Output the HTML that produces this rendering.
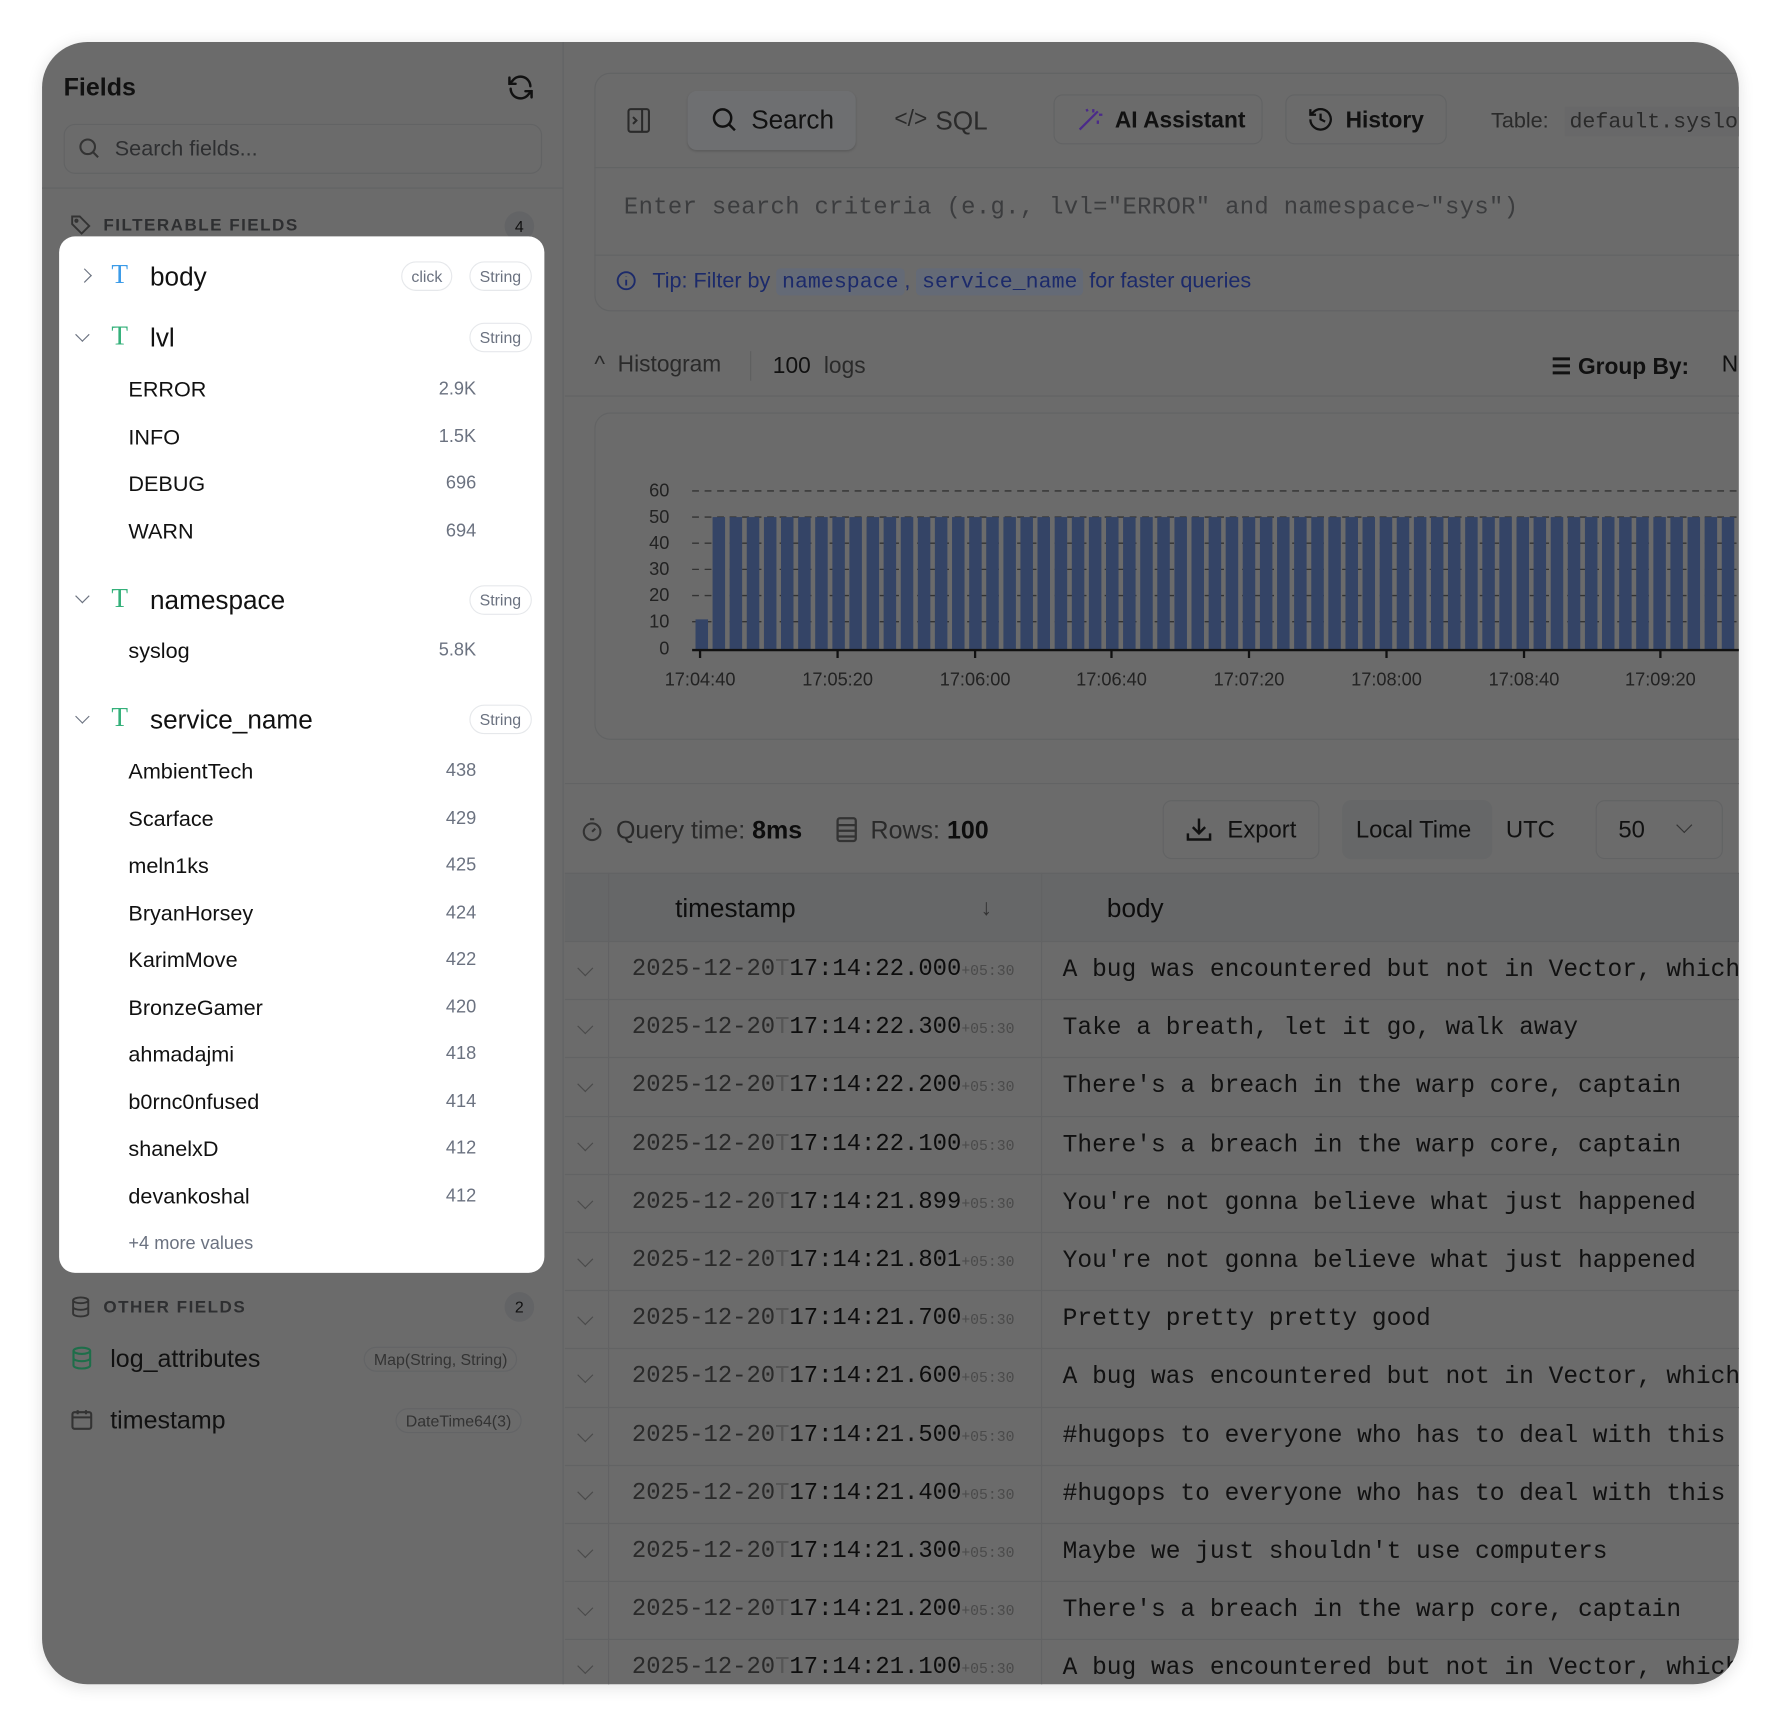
<!DOCTYPE html>
<html><head><meta charset="utf-8"><style>
*{box-sizing:border-box;margin:0;padding:0}
html,body{width:1782px;height:1728px;overflow:hidden;background:#fff;font-family:"Liberation Sans",sans-serif}
#w{position:absolute;left:0;top:0;width:1568px;height:1520px;transform:scale(1.13648);transform-origin:0 0}
.card{position:absolute;left:37px;top:37px;width:1493px;height:1445px;border-radius:40px;background:#6b6b6b;overflow:hidden;box-shadow:0 2px 14px rgba(0,0,0,.12)}
.abs{position:absolute}
.t{position:absolute;white-space:nowrap}
.mono{font-family:"Liberation Mono",monospace}
.pop{position:absolute;left:15px;top:171px;width:427px;height:912px;background:#fff;border-radius:14px}
.pill{position:absolute;border:1px solid #e6e8eb;border-radius:14px;font-size:14px;color:#6b7280;height:26px;line-height:24px;padding:0 8px}
.v{position:absolute;left:61px;font-size:19px;color:#111}
.c{position:absolute;right:60px;font-size:16px;color:#6b7280}
.row{position:absolute;left:460px;width:1040px;height:51px;border-top:1px solid #626364}
.ts{position:absolute;left:519px;font-size:21px;color:#2a2a2a;font-family:"Liberation Mono",monospace}
.ts b{color:#0d0d0d;font-weight:normal}
.ts i{font-style:normal;font-size:13px;color:#4a4a4a}
.bd{position:absolute;left:898px;font-size:21.6px;color:#111;font-family:"Liberation Mono",monospace;white-space:nowrap}
.chev{position:absolute;left:473px;width:10px;height:10px;border-right:1.5px solid #4a4a4a;border-bottom:1.5px solid #4a4a4a;transform:rotate(45deg)}
</style></head><body><div id="w">
<div class="card">
<div class="abs" style="left:458px;top:0;width:1px;height:1445px;background:#626364"></div>
<div class="t" style="left:19px;top:27px;font-size:22px;font-weight:bold;color:#111">Fields</div>
<svg class="abs" style="left:408px;top:27px" width="26" height="26" viewBox="0 0 24 24" fill="none" stroke="#111" stroke-width="2" stroke-linecap="round"><path d="M20 11a8 8 0 0 0-14.5-4.5L3 9M3 4v5h5M4 13a8 8 0 0 0 14.5 4.5L21 15M21 20v-5h-5"/></svg>
<div class="abs" style="left:19px;top:72px;width:421px;height:44px;border:1px solid #626364;border-radius:10px"></div>
<svg class="abs" style="left:31px;top:83px" width="22" height="22" viewBox="0 0 24 24" fill="none" stroke="#333" stroke-width="2"><circle cx="10" cy="10" r="7"/><path d="M15 15l5 5"/></svg>
<div class="t" style="left:64px;top:84px;font-size:19px;color:#2e2f31">Search fields...</div>
<div class="abs" style="left:0;top:128px;width:458px;height:1px;background:#626364"></div>
<svg class="abs" style="left:24px;top:151px" width="20" height="20" viewBox="0 0 24 24" fill="none" stroke="#333" stroke-width="2"><path d="M3 3h8l10 10-8 8L3 11z"/><circle cx="7.5" cy="7.5" r="1.2"/></svg>
<div class="t" style="left:54px;top:153px;font-size:15px;font-weight:bold;letter-spacing:1.3px;color:#2e2f31">FILTERABLE FIELDS</div>
<div class="abs" style="left:407px;top:149px;width:26px;height:26px;border-radius:13px;background:#636466;font-size:14px;text-align:center;line-height:26px;color:#111">4</div>
<div class="pop">
 <div class="abs" style="left:18px;top:30px;width:9px;height:9px;border-right:1.5px solid #6b7280;border-top:1.5px solid #6b7280;transform:rotate(45deg)"></div>
 <div class="t" style="left:46px;top:21px;font-size:24px;color:#3b9be8;font-family:'Liberation Serif',serif">T</div>
 <div class="t" style="left:80px;top:22px;font-size:23px;color:#111">body</div>
 <div class="pill" style="left:301px;top:22px">click</div><div class="pill" style="left:361px;top:22px">String</div>
 <div class="abs" style="left:16px;top:82px;width:9px;height:9px;border-right:1.5px solid #6b7280;border-bottom:1.5px solid #6b7280;transform:rotate(45deg)"></div>
 <div class="t" style="left:46px;top:75px;font-size:24px;color:#34b07a;font-family:'Liberation Serif',serif">T</div>
 <div class="t" style="left:80px;top:76px;font-size:23px;color:#111">lvl</div>
 <div class="pill" style="left:361px;top:76px">String</div>
 <div class="v" style="top:125px">ERROR</div><div class="c" style="top:126px">2.9K</div>
 <div class="v" style="top:167px">INFO</div><div class="c" style="top:168px">1.5K</div>
 <div class="v" style="top:208px">DEBUG</div><div class="c" style="top:209px">696</div>
 <div class="v" style="top:250px">WARN</div><div class="c" style="top:251px">694</div>
 <div class="abs" style="left:16px;top:312px;width:9px;height:9px;border-right:1.5px solid #6b7280;border-bottom:1.5px solid #6b7280;transform:rotate(45deg)"></div>
 <div class="t" style="left:46px;top:306px;font-size:24px;color:#34b07a;font-family:'Liberation Serif',serif">T</div>
 <div class="t" style="left:80px;top:307px;font-size:23px;color:#111">namespace</div>
 <div class="pill" style="left:361px;top:307px">String</div>
 <div class="v" style="top:355px">syslog</div><div class="c" style="top:356px">5.8K</div>
 <div class="abs" style="left:16px;top:418px;width:9px;height:9px;border-right:1.5px solid #6b7280;border-bottom:1.5px solid #6b7280;transform:rotate(45deg)"></div>
 <div class="t" style="left:46px;top:411px;font-size:24px;color:#34b07a;font-family:'Liberation Serif',serif">T</div>
 <div class="t" style="left:80px;top:412px;font-size:23px;color:#111">service_name</div>
 <div class="pill" style="left:361px;top:412px">String</div>
 <div class="v" style="top:461px">AmbientTech</div><div class="c" style="top:462px">438</div>
 <div class="v" style="top:503px">Scarface</div><div class="c" style="top:504px">429</div>
 <div class="v" style="top:544px">meln1ks</div><div class="c" style="top:545px">425</div>
 <div class="v" style="top:586px">BryanHorsey</div><div class="c" style="top:587px">424</div>
 <div class="v" style="top:627px">KarimMove</div><div class="c" style="top:628px">422</div>
 <div class="v" style="top:669px">BronzeGamer</div><div class="c" style="top:670px">420</div>
 <div class="v" style="top:710px">ahmadajmi</div><div class="c" style="top:711px">418</div>
 <div class="v" style="top:752px">b0rnc0nfused</div><div class="c" style="top:753px">414</div>
 <div class="v" style="top:793px">shanelxD</div><div class="c" style="top:794px">412</div>
 <div class="v" style="top:835px">devankoshal</div><div class="c" style="top:836px">412</div>
 <div class="t" style="left:61px;top:878px;font-size:16px;color:#6b7280">+4 more values</div>
</div>
<svg class="abs" style="left:24px;top:1103px" width="20" height="20" viewBox="0 0 24 24" fill="none" stroke="#333" stroke-width="2"><ellipse cx="12" cy="5" rx="8" ry="3"/><path d="M4 5v14c0 1.7 3.6 3 8 3s8-1.3 8-3V5M4 12c0 1.7 3.6 3 8 3s8-1.3 8-3"/></svg>
<div class="t" style="left:54px;top:1105px;font-size:15px;font-weight:bold;letter-spacing:1.3px;color:#2e2f31">OTHER FIELDS</div>
<div class="abs" style="left:407px;top:1100px;width:26px;height:26px;border-radius:13px;background:#636466;font-size:14px;text-align:center;line-height:26px;color:#111">2</div>
<svg class="abs" style="left:24px;top:1147px" width="22" height="22" viewBox="0 0 24 24" fill="none" stroke="#1e6e4a" stroke-width="2"><ellipse cx="12" cy="5" rx="8" ry="3"/><path d="M4 5v14c0 1.7 3.6 3 8 3s8-1.3 8-3V5M4 12c0 1.7 3.6 3 8 3s8-1.3 8-3"/></svg>
<div class="t" style="left:60px;top:1146px;font-size:22px;color:#111">log_attributes</div>
<div class="t" style="left:283px;top:1148px;font-size:14px;color:#333;border:1px solid #636466;border-radius:12px;padding:2px 8px">Map(String, String)</div>
<svg class="abs" style="left:24px;top:1201px" width="22" height="22" viewBox="0 0 24 24" fill="none" stroke="#333" stroke-width="2"><rect x="3" y="5" width="18" height="16" rx="2"/><path d="M3 10h18M8 3v4M16 3v4"/></svg>
<div class="t" style="left:60px;top:1200px;font-size:22px;color:#111">timestamp</div>
<div class="t" style="left:311px;top:1202px;font-size:14px;color:#333;border:1px solid #636466;border-radius:12px;padding:2px 8px">DateTime64(3)</div>

<div class="abs" style="left:486px;top:27px;width:1020px;height:210px;border:1px solid #626364;border-radius:14px"></div>
<div class="abs" style="left:486px;top:110px;width:1020px;height:1px;background:#626364"></div>
<svg class="abs" style="left:514px;top:57px" width="22" height="24" viewBox="0 0 22 24" fill="none" stroke="#2a2a2a" stroke-width="1.8"><rect x="2" y="2" width="18" height="20" rx="2"/><path d="M14 2v20M6 9l3 3-3 3"/></svg>
<div class="abs" style="left:568px;top:43px;width:148px;height:52px;border-radius:8px;background:#6e6f71;box-shadow:0 1px 2px rgba(0,0,0,.15)"></div>
<svg class="abs" style="left:588px;top:56px" width="26" height="26" viewBox="0 0 24 24" fill="none" stroke="#111" stroke-width="2"><circle cx="10" cy="10" r="7"/><path d="M15 15l5 5"/></svg>
<div class="t" style="left:624px;top:55px;font-size:23px;color:#111">Search</div>
<div class="t" style="left:750px;top:57px;font-size:20px;color:#2a2a2a">&lt;/&gt;</div>
<div class="t" style="left:786px;top:56px;font-size:23px;color:#2a2a2a">SQL</div>
<div class="abs" style="left:890px;top:46px;width:184px;height:44px;border:1px solid #626364;border-radius:8px"></div>
<svg class="abs" style="left:910px;top:56px" width="24" height="24" viewBox="0 0 24 24" fill="none" stroke="#4b2a8a" stroke-width="2"><path d="M3 21L19 5M15 3v3M20 8h3M19 13v3M9 3l1 2"/></svg>
<div class="t" style="left:944px;top:58px;font-size:20px;font-weight:bold;color:#111">AI Assistant</div>
<div class="abs" style="left:1094px;top:46px;width:142px;height:44px;border:1px solid #626364;border-radius:8px"></div>
<svg class="abs" style="left:1113px;top:56px" width="24" height="24" viewBox="0 0 24 24" fill="none" stroke="#111" stroke-width="2"><path d="M3 12a9 9 0 1 0 3-6.7L3 8M3 3v5h5M12 7v5l4 2"/></svg>
<div class="t" style="left:1147px;top:58px;font-size:20px;font-weight:bold;color:#111">History</div>
<div class="t" style="left:1275px;top:59px;font-size:19px;color:#2a2a2a">Table:</div>
<div class="t mono" style="left:1340px;top:57px;font-size:19px;color:#2a2a2a;background:#686869;padding:2px 4px">default.syslog</div>
<div class="t mono" style="left:512px;top:135px;font-size:21px;color:#3b3c3e;letter-spacing:0.3px">Enter search criteria (e.g., lvl="ERROR" and namespace~"sys")</div>
<div class="abs" style="left:486px;top:187px;width:1020px;height:1px;background:#626364"></div>
<svg class="abs" style="left:504px;top:200px" width="20" height="20" viewBox="0 0 24 24" fill="none" stroke="#1c2a6a" stroke-width="2"><circle cx="12" cy="12" r="9"/><path d="M12 11v6M12 7.5v.5"/></svg>
<div class="t" style="left:537px;top:200px;font-size:19px;color:#1c2a6a">Tip: Filter by <span class="mono" style="background:#646a76;padding:1px 5px;border-radius:4px">namespace</span>, <span class="mono" style="background:#646a76;padding:1px 5px;border-radius:4px">service_name</span> for faster queries</div>

<div class="t" style="left:486px;top:273px;font-size:20px;color:#2a2a2a">^ &nbsp;Histogram</div>
<div class="abs" style="left:623px;top:272px;width:1px;height:26px;background:#5e5f60"></div>
<div class="t" style="left:643px;top:274px;font-size:20px;color:#111">100 <span style="color:#2a2a2a;margin-left:6px">logs</span></div>
<div class="t" style="left:1328px;top:273px;font-size:20px;font-weight:bold;color:#111">☰ Group By:</div>
<div class="t" style="left:1478px;top:273px;font-size:20px;color:#111">N</div>
<div class="abs" style="left:460px;top:311px;width:1040px;height:1px;background:#626364"></div>
<div class="abs" style="left:486px;top:326px;width:1020px;height:288px;border:1px solid #626364;border-radius:14px"></div>
<svg class="abs" style="left:486px;top:370px" width="1010" height="210">
<g font-family="Liberation Sans" font-size="16" fill="#222" text-anchor="end">
<text x="66" y="30">60</text><text x="66" y="53">50</text><text x="66" y="76">40</text><text x="66" y="99">30</text><text x="66" y="122">20</text><text x="66" y="145">10</text><text x="66" y="169">0</text></g>
<g stroke="#333" stroke-dasharray="6 5" stroke-width="1.2"><line x1="86" x2="1010" y1="25" y2="25"/><line x1="86" x2="1010" y1="48" y2="48"/><line x1="86" x2="1010" y1="71" y2="71"/><line x1="86" x2="1010" y1="94" y2="94"/><line x1="86" x2="1010" y1="117" y2="117"/><line x1="86" x2="1010" y1="140" y2="140"/></g>
<rect x="89" y="138" width="11" height="27" fill="#344466"/>
<g fill="#344466" id="bars"></g>
<line x1="86" x2="1010" y1="165" y2="165" stroke="#111" stroke-width="2"/>
<g stroke="#111" stroke-width="2"><line x1="93" x2="93" y1="165" y2="172"/><line x1="214" x2="214" y1="165" y2="172"/><line x1="335" x2="335" y1="165" y2="172"/><line x1="455" x2="455" y1="165" y2="172"/><line x1="576" x2="576" y1="165" y2="172"/><line x1="697" x2="697" y1="165" y2="172"/><line x1="818" x2="818" y1="165" y2="172"/><line x1="938" x2="938" y1="165" y2="172"/></g>
<g font-family="Liberation Sans" font-size="16" fill="#222" text-anchor="middle"><text x="93" y="196">17:04:40</text><text x="214" y="196">17:05:20</text><text x="335" y="196">17:06:00</text><text x="455" y="196">17:06:40</text><text x="576" y="196">17:07:20</text><text x="697" y="196">17:08:00</text><text x="818" y="196">17:08:40</text><text x="938" y="196">17:09:20</text></g>
</svg>

<div class="abs" style="left:460px;top:652px;width:1040px;height:1px;background:#626364"></div>
<svg class="abs" style="left:473px;top:682px" width="22" height="22" viewBox="0 0 24 24" fill="none" stroke="#333" stroke-width="2"><circle cx="12" cy="14" r="8"/><path d="M12 14l3-3M10 2h4"/></svg>
<div class="t" style="left:505px;top:681px;font-size:22px;color:#2a2a2a">Query time: <span style="color:#0d0d0d;font-weight:bold">8ms</span></div>
<svg class="abs" style="left:697px;top:681px" width="22" height="24" viewBox="0 0 22 24" fill="none" stroke="#333" stroke-width="2"><rect x="3" y="2" width="16" height="20" rx="2"/><path d="M3 8h16M3 13h16M3 18h16"/></svg>
<div class="t" style="left:729px;top:681px;font-size:22px;color:#2a2a2a">Rows: <span style="color:#0d0d0d;font-weight:bold">100</span></div>
<div class="abs" style="left:986px;top:667px;width:138px;height:52px;border:1px solid #626364;border-radius:8px"></div>
<svg class="abs" style="left:1005px;top:680px" width="26" height="26" viewBox="0 0 24 24" fill="none" stroke="#111" stroke-width="2"><path d="M12 3v12M7 10l5 5 5-5M3 15v5h18v-5"/></svg>
<div class="t" style="left:1043px;top:682px;font-size:21px;color:#111">Export</div>
<div class="abs" style="left:1144px;top:667px;width:132px;height:52px;border-radius:8px;background:#666768"></div>
<div class="t" style="left:1156px;top:682px;font-size:21px;color:#111">Local Time</div>
<div class="t" style="left:1288px;top:682px;font-size:21px;color:#111">UTC</div>
<div class="abs" style="left:1367px;top:667px;width:112px;height:52px;border:1px solid #626364;border-radius:8px"></div>
<div class="t" style="left:1387px;top:682px;font-size:21px;color:#111">50</div>
<div class="abs" style="left:1440px;top:684px;width:10px;height:10px;border-right:1.5px solid #333;border-bottom:1.5px solid #333;transform:rotate(45deg)"></div>

<div class="abs" style="left:460px;top:731px;width:1040px;height:60px;background:#666768;border-top:1px solid #626364"></div>
<div class="abs" style="left:498px;top:731px;width:1px;height:720px;background:#626364"></div>
<div class="abs" style="left:879px;top:731px;width:1px;height:720px;background:#626364"></div>
<div class="t" style="left:557px;top:749px;font-size:23px;color:#0d0d0d">timestamp</div>
<div class="t" style="left:826px;top:751px;font-size:20px;color:#333">↓</div>
<div class="t" style="left:937px;top:749px;font-size:23px;color:#0d0d0d">body</div>
<div id="rows"></div>
</div>
</div>
<script>
var g=document.getElementById('bars'),s='';
for(var i=0;i<60;i++){var x=104+i*15.05;if(x>1010)break;s+='<rect x="'+x.toFixed(1)+'" y="48" width="11" height="117"/>';}
g.innerHTML=s;
var d=[["22.000","A bug was encountered but not in Vector, which d"],["22.300","Take a breath, let it go, walk away"],["22.200","There's a breach in the warp core, captain"],["22.100","There's a breach in the warp core, captain"],["21.899","You're not gonna believe what just happened"],["21.801","You're not gonna believe what just happened"],["21.700","Pretty pretty pretty good"],["21.600","A bug was encountered but not in Vector, which d"],["21.500","#hugops to everyone who has to deal with this"],["21.400","#hugops to everyone who has to deal with this"],["21.300","Maybe we just shouldn't use computers"],["21.200","There's a breach in the warp core, captain"],["21.100","A bug was encountered but not in Vector, which d"]];
var h='';
for(var j=0;j<d.length;j++){var y=791+j*51.2;
h+='<div class="row" style="top:'+y+'px"></div><div class="chev" style="top:'+(y+19)+'px"></div><div class="ts" style="top:'+(y+14)+'px">2025-12-20<span style="color:#555">T</span><b>17:14:'+d[j][0]+'</b><i>+05:30</i></div><div class="bd" style="top:'+(y+14)+'px">'+d[j][1]+'</div>';}
document.getElementById('rows').innerHTML=h;
</script>
</body></html>
